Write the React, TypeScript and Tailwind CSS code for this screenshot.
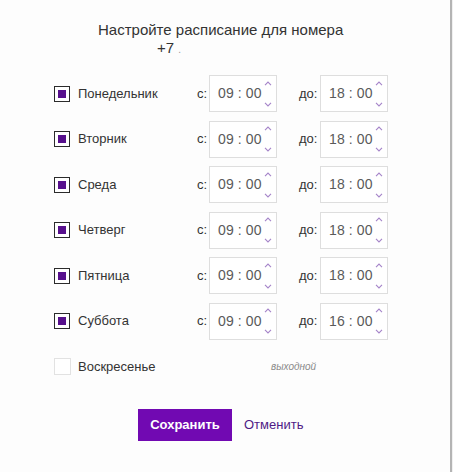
import React from 'react';

const days = [
  { name: 'Понедельник', from: '09 : 00', to: '18 : 00', on: true },
  { name: 'Вторник', from: '09 : 00', to: '18 : 00', on: true },
  { name: 'Среда', from: '09 : 00', to: '18 : 00', on: true },
  { name: 'Четверг', from: '09 : 00', to: '18 : 00', on: true },
  { name: 'Пятница', from: '09 : 00', to: '18 : 00', on: true },
  { name: 'Суббота', from: '09 : 00', to: '16 : 00', on: true },
  { name: 'Воскресенье', from: '', to: '', on: false },
];

function Spinner() {
  return (
    <div className="flex flex-col justify-between h-[26px] w-[8px]">
      <svg width="8" height="5" viewBox="0 0 8 5" fill="none">
        <path d="M1 4.2 L4 1 L7 4.2" stroke="#a584c9" strokeWidth="1.1" />
      </svg>
      <svg width="8" height="5" viewBox="0 0 8 5" fill="none">
        <path d="M1 0.8 L4 4 L7 0.8" stroke="#a584c9" strokeWidth="1.1" />
      </svg>
    </div>
  );
}

function TimeBox({ value }: { value: string }) {
  return (
    <div className="w-[68px] h-[37px] border border-[#dedede] bg-white flex items-center pl-[8px] pr-[4px] justify-between">
      <span className="text-[14px] text-[#5a5a5a] tracking-[0.1px]">{value}</span>
      <Spinner />
    </div>
  );
}

function Check({ on }: { on: boolean }) {
  if (!on) {
    return <div className="w-[17px] h-[17px] border border-[#e2e2e2] bg-white" />;
  }
  return (
    <div className="w-[16px] h-[16px] border-[1.5px] border-[#2b2b2b] bg-white flex items-center justify-center">
      <div className="w-[8px] h-[8px] bg-[#560f8c]" />
    </div>
  );
}

export default function App() {
  return (
    <div className="w-[453px] h-[472px] flex bg-[#fdfdfd]" style={{ fontFamily: '"Liberation Sans", Arial, sans-serif' }}>
      <div className="w-[450px] h-full pt-[21px]">
        <div className="text-[15px] text-[#333] leading-[18px]">
          <div className="pl-[98px]">Настройте расписание для номера</div>
          <div className="pl-[157px]">
            +7 <span className="text-[#999] text-[10px]">.</span>
          </div>
        </div>

        <div className="mt-[16px] flex flex-col gap-[8.5px]">
          {days.map((d) => (
            <div key={d.name} className="h-[37px] flex items-center">
              <div className="w-[78px] pl-[54px] flex items-center">
                <Check on={d.on} />
              </div>
              <div className="w-[119px] text-[13px] text-[#333]">{d.name}</div>
              {d.on ? (
                <>
                  <div className="w-[12px] text-[13px] text-[#333]">c:</div>
                  <TimeBox value={d.from} />
                  <div className="w-[43px] pl-[22px] text-[13px] text-[#333]">до:</div>
                  <TimeBox value={d.to} />
                </>
              ) : (
                <div className="pl-[74px] text-[10px] italic text-[#8a8a8a]">выходной</div>
              )}
            </div>
          ))}
        </div>

        <div className="mt-[23.5px] pl-[138px] flex items-center gap-[12px]">
          <button className="w-[94px] h-[32px] bg-[#7109b2] text-white text-[13px] font-bold">
            Сохранить
          </button>
          <span className="text-[13px] text-[#4f1a86]">Отменить</span>
        </div>
      </div>
      <div className="w-[2px] h-full bg-[#b4b4b4]" />
      <div className="w-[1px] h-full bg-[#f0f0f0]" />
    </div>
  );
}
